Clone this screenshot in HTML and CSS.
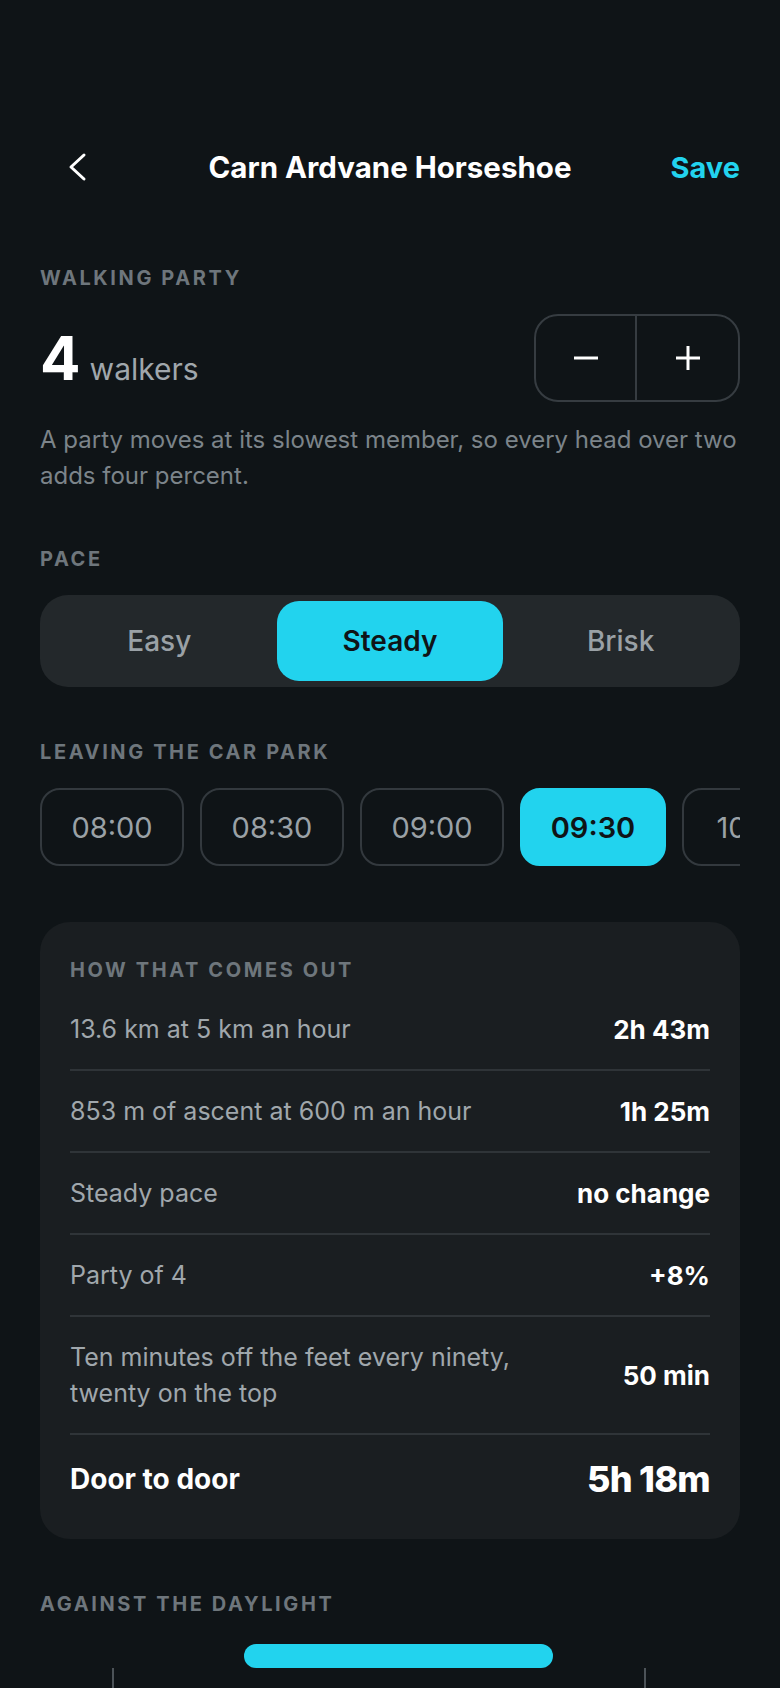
FILE: index.html
```html
<!DOCTYPE html>
<html lang="en">
<head>
    <meta charset="UTF-8">
    <meta name="viewport" content="width=device-width, initial-scale=1.0">
    <title>Carn Ardvane Horseshoe</title>
    <link rel="stylesheet" href="styles.css">
</head>
<body>

<div class="screen">
    <header class="topbar">
        <button class="back" aria-label="Back">
            <svg width="20" height="32" viewBox="0 0 20 32"><path d="M16 4 L3 16 L16 28" fill="none" stroke="#fff" stroke-width="3" stroke-linecap="round" stroke-linejoin="round"/></svg>
        </button>
        <h1>Carn Ardvane Horseshoe</h1>
        <button class="save">Save</button>
    </header>

    <section class="party">
        <h3 class="label">Walking party</h3>
        <div class="party-row">
            <div class="count"><span class="num">4</span><span class="unit">walkers</span></div>
            <div class="stepper">
                <button aria-label="Fewer">
                    <svg width="28" height="28" viewBox="0 0 28 28"><path d="M2 14 H26" stroke="#fff" stroke-width="3"/></svg>
                </button>
                <button aria-label="More">
                    <svg width="28" height="28" viewBox="0 0 28 28"><path d="M2 14 H26 M14 2 V26" stroke="#fff" stroke-width="3"/></svg>
                </button>
            </div>
        </div>
        <p class="hint">A party moves at its slowest member, so every head over two adds four percent.</p>
    </section>

    <section class="section">
        <h3 class="label">Pace</h3>
        <div class="segmented">
            <button>Easy</button>
            <button class="active">Steady</button>
            <button>Brisk</button>
        </div>
    </section>

    <section class="section">
        <h3 class="label">Leaving the car park</h3>
        <div class="times">
            <button class="chip">08:00</button>
            <button class="chip">08:30</button>
            <button class="chip">09:00</button>
            <button class="chip active">09:30</button>
            <button class="chip">10:00</button>
            <button class="chip">10:30</button>
        </div>
    </section>

    <section class="card">
        <h3 class="label">How that comes out</h3>
        <div class="row">
            <span class="what">13.6 km at 5 km an hour</span>
            <span class="value">2h 43m</span>
        </div>
        <div class="row">
            <span class="what">853 m of ascent at 600 m an hour</span>
            <span class="value">1h 25m</span>
        </div>
        <div class="row">
            <span class="what">Steady pace</span>
            <span class="value">no change</span>
        </div>
        <div class="row">
            <span class="what">Party of 4</span>
            <span class="value">+8%</span>
        </div>
        <div class="row">
            <span class="what">Ten minutes off the feet every ninety, twenty on the top</span>
            <span class="value">50 min</span>
        </div>
        <div class="row total">
            <span class="what">Door to door</span>
            <span class="value">5h 18m</span>
        </div>
    </section>

    <section class="section">
        <h3 class="label">Against the daylight</h3>
        <div class="timeline">
            <div class="tick" style="left: 72px"></div>
            <div class="tick" style="left: 604px"></div>
            <div class="walk" style="left: 204px; width: 309px"></div>
        </div>
    </section>
</div>

</body>
</html>
```

FILE: styles.css
```css
body {
    margin: 0;
    background-color: #0f1417;
    font-family: Inter, "Noto Sans", sans-serif;
    color: #ffffff;
}
button {
    font-family: inherit;
    background: none;
    border: none;
    padding: 0;
    color: inherit;
    cursor: pointer;
}
.screen {
    box-sizing: border-box;
    height: 1688px;
    overflow: hidden;
    padding: 127px 40px 0;
}
.topbar {
    display: grid;
    grid-template-columns: 1fr auto 1fr;
    align-items: center;
    height: 80px;
}
.back {
    justify-self: start;
    display: flex;
    margin-left: 28px;
}
.topbar h1 {
    margin: 0;
    font-size: 29.5px;
    font-weight: 700;
    line-height: 34px;
}
.save {
    justify-self: end;
    font-size: 29px;
    font-weight: 700;
    color: #22d3ee;
}
.label {
    margin: 0 0 24px;
    font-size: 20px;
    line-height: 24px;
    font-weight: 700;
    letter-spacing: 0.13em;
    text-transform: uppercase;
    color: #6e767c;
}
.party {
    margin-top: 59px;
}
.party-row {
    display: flex;
    justify-content: space-between;
    align-items: center;
}
.count {
    display: flex;
    align-items: baseline;
}
.num {
    font-size: 60px;
    line-height: 72px;
    font-weight: 700;
}
.unit {
    margin-left: 9px;
    font-size: 30px;
    color: #a0a7ac;
}
.stepper {
    display: flex;
    border: 2px solid #363c41;
    border-radius: 24px;
}
.stepper button {
    display: flex;
    align-items: center;
    justify-content: center;
    width: 101px;
    height: 84px;
}
.stepper button:first-child {
    border-right: 2px solid #363c41;
}
.hint {
    margin: 20px 0 0;
    font-size: 24px;
    line-height: 36px;
    color: #7c848a;
}
.section {
    margin-top: 53px;
}
.segmented {
    display: grid;
    grid-template-columns: repeat(3, 1fr);
    gap: 4px;
    padding: 6px;
    background-color: #23282b;
    border-radius: 28px;
}
.segmented button {
    height: 80px;
    border-radius: 22px;
    font-size: 28px;
    font-weight: 500;
    color: #9aa1a6;
}
.segmented button.active {
    background-color: #22d3ee;
    color: #0f1417;
    font-weight: 600;
}
.times {
    display: flex;
    gap: 16px;
    overflow: hidden;
}
.chip {
    flex-shrink: 0;
    box-sizing: border-box;
    width: 144px;
    height: 78px;
    border: 2px solid #33393e;
    border-radius: 20px;
    font-size: 29px;
    color: #9aa1a6;
}
.chip.active {
    width: 146px;
    background-color: #22d3ee;
    border-color: #22d3ee;
    color: #0f1417;
    font-weight: 600;
}
.card {
    margin-top: 56px;
    padding: 36px 30px 38px;
    background-color: #1a1e21;
    border-radius: 30px;
}
.card .label {
    margin-bottom: 7px;
}
.row {
    display: flex;
    justify-content: space-between;
    align-items: center;
    gap: 24px;
    padding: 22px 0;
    border-bottom: 2px solid #2f3438;
}
.row .what {
    max-width: 460px;
    font-size: 25px;
    line-height: 36px;
    color: #a0a7ac;
}
.row .value {
    font-size: 26px;
    font-weight: 700;
    white-space: nowrap;
}
.row.total {
    padding-bottom: 0;
    border-bottom: none;
}
.row.total .what {
    font-size: 28px;
    font-weight: 700;
    color: #ffffff;
}
.row.total .value {
    font-size: 36px;
    line-height: 44px;
    font-weight: 800;
    letter-spacing: -0.02em;
}
.timeline {
    position: relative;
    height: 120px;
    margin-top: 28px;
}
.walk {
    position: absolute;
    top: 0;
    height: 24px;
    border-radius: 12px;
    background-color: #22d3ee;
}
.tick {
    position: absolute;
    top: 24px;
    width: 2px;
    height: 100px;
    background-color: #4c5358;
}
```
